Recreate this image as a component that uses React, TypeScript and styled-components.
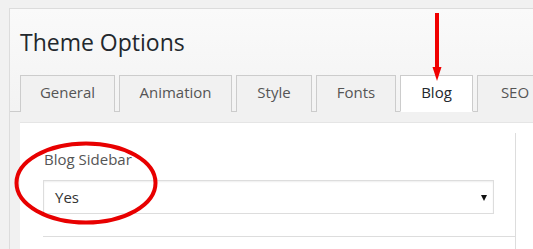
import React from 'react';
import styled, { createGlobalStyle } from 'styled-components';

const GlobalStyle = createGlobalStyle`
    html, body {
        margin: 0;
        padding: 0;
        background: #f1f1f1;
        font-family: 'Open Sans', 'Liberation Sans', sans-serif;
        overflow: hidden;
    }
`;

const Page = styled.div`
    position: relative;
    width: 533px;
    height: 249px;
    overflow: hidden;
    padding: 8px 0 0 9px;
    box-sizing: border-box;
`;

const Panel = styled.div`
    width: 620px;
    height: 400px;
    border: 1px solid #dcdcdc;
    background: linear-gradient(#fafafa, #f3f3f3 100px);
`;

const Title = styled.h1`
    margin: 0;
    padding: 17px 0 0 10px;
    font-size: 23px;
    line-height: 32px;
    font-weight: 400;
    color: #23282d;
`;

const TabBar = styled.div`
    display: flex;
    gap: 4px;
    margin-top: 17px;
    padding-left: 10px;
    border-bottom: 1px solid #cccccc;
`;

const Tab = styled.div<{ $active?: boolean; $w: number }>`
    width: ${p => p.$w}px;
    box-sizing: border-box;
    flex-shrink: 0;
    height: 37px;
    line-height: 33px;
    text-align: center;
    margin-bottom: -1px;
    border: 1px solid #cccccc;
    border-bottom: ${p => (p.$active ? '1px solid #ffffff' : 'none')};
    background: ${p => (p.$active ? '#ffffff' : '#f1f1f1')};
    color: ${p => (p.$active ? '#23282d' : '#555555')};
    font-size: 15px;
    font-weight: 400;
`;

const Body = styled.div`
    padding: 10px 0 0 10px;
    background: #f1f1f1;
`;

const Content = styled.div`
    background: #ffffff;
    border-top: 1px solid #e5e5e5;
    padding-top: 10px;
    height: 200px;
`;

const Section = styled.div`
    width: 495px;
    border-right: 1px solid #dddddd;
    height: 200px;
`;

const Field = styled.div`
    margin-left: 23px;
    padding: 16px 0 22px;
    border-bottom: 1px solid #dddddd;
`;

const Label = styled.div`
    font-size: 15px;
    line-height: 20px;
    color: #555555;
    padding-left: 1px;
    margin-bottom: 11px;
`;

const Select = styled.div`
    position: relative;
    height: 32px;
    line-height: 32px;
    border: 1px solid #dddddd;
    box-shadow: inset 0 1px 2px rgba(0, 0, 0, 0.07);
    padding-left: 11px;
    width: 438px;
    font-size: 15px;
    color: #333333;
`;

const Caret = styled.span`
    position: absolute;
    right: 6px;
    top: 14px;
    width: 0;
    height: 0;
    border-left: 3.5px solid transparent;
    border-right: 3.5px solid transparent;
    border-top: 6px solid #111111;
`;

const Overlay = styled.svg`
    position: absolute;
    top: 0;
    left: 0;
    pointer-events: none;
`;

const tabs: { label: string; width: number }[] = [
    { label: 'General', width: 95 },
    { label: 'Animation', width: 113 },
    { label: 'Style', width: 76 },
    { label: 'Fonts', width: 80 },
    { label: 'Blog', width: 73 },
    { label: 'SEO', width: 76 },
];

const App: React.FC = () => (
    <>
        <GlobalStyle />
        <Page>
            <Panel>
                <Title>Theme Options</Title>
                <TabBar>
                    {tabs.map(t => (
                        <Tab key={t.label} $w={t.width} $active={t.label === 'Blog'}>{t.label}</Tab>
                    ))}
                </TabBar>
                <Body>
                    <Content>
                        <Section>
                            <Field>
                                <Label>Blog Sidebar</Label>
                                <Select>
                                    Yes
                                    <Caret />
                                </Select>
                            </Field>
                        </Section>
                    </Content>
                </Body>
            </Panel>
            <Overlay width="533" height="249" viewBox="0 0 533 249">
                <rect x="435" y="13" width="4" height="57" fill="#f00000" />
                <polygon points="432.5,67 441.5,67 437,81" fill="#f00000" />
                <ellipse cx="86" cy="183" rx="69.5" ry="39.5" fill="none" stroke="#e80000" strokeWidth="4" />
            </Overlay>
        </Page>
    </>
);

export default App;
